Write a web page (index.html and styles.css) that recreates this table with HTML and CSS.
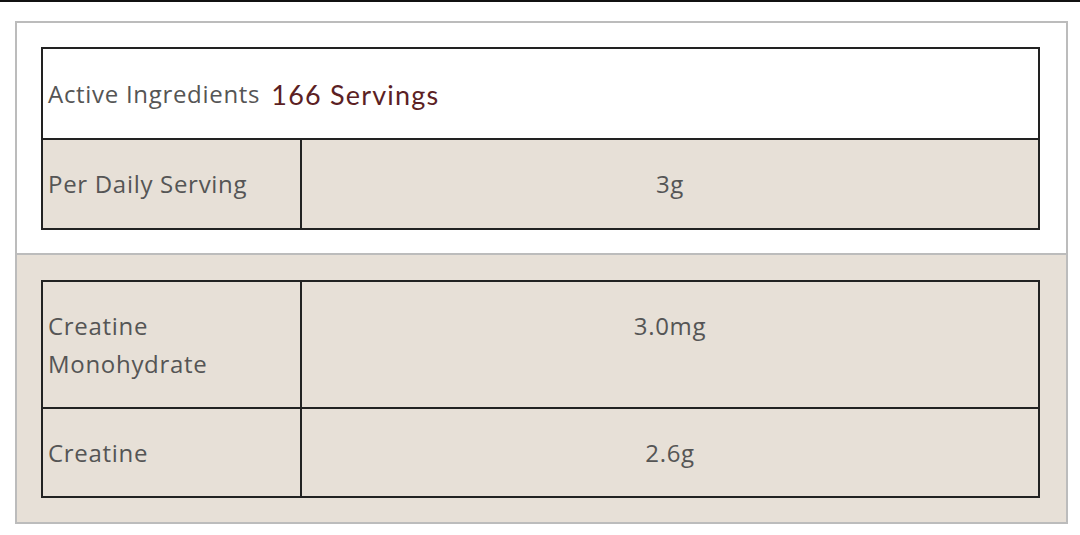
FILE: index.html
```
<!DOCTYPE html>
<html>
<head>
<meta charset="utf-8">
<link rel="stylesheet" href="styles.css">
</head>
<body>
<div class="topbar"></div>
<div class="panel">
  <div class="sec sec-top">
    <table class="tbl">
      <tr class="head"><td colspan="2"><div class="headline"><span class="lbl">Active Ingredients</span><span class="servings">166 Servings</span></div></td></tr>
      <tr><td class="c1">Per Daily Serving</td><td class="c2">3g</td></tr>
    </table>
  </div>
  <div class="sec sec-bottom">
    <table class="tbl">
      <tr><td class="c1">Creatine<br>Monohydrate</td><td class="c2">3.0mg</td></tr>
      <tr><td class="c1">Creatine</td><td class="c2">2.6g</td></tr>
    </table>
  </div>
</div>
</body>
</html>
```
FILE: styles.css
```
html, body { margin: 0; padding: 0; background: #fff; }
body { font-family: "Open Sans", "Liberation Sans", sans-serif; color: #555; }
.topbar { height: 2px; background: #111; }
.panel {
  margin: 19px 12px 0 15px;
  border: 2px solid #bcbcbc;
  width: 1049px;
}
.sec-top { background: #fff; padding: 24px 26px 23px 24px; border-bottom: 2px solid #bcbcbc; }
.sec-bottom { background: #e7e0d7; padding: 25px 26px 24px 24px; }
.tbl { width: 999px; border-collapse: collapse; }
.tbl td {
  border: 2px solid #222;
  font-size: 24px;
  letter-spacing: 0.7px;
  line-height: 38px;
  padding: 25px 5px 25px 5px;
  vertical-align: top;
}
.sec-bottom .tbl td { padding: 25px 5px 24px 5px; }
.tbl .head td { background: #fff; padding: 26px 5px 25px 5px; }
.sec-top .tbl tr:not(.head) td { background: #e7e0d7; }
.headline { display: flex; align-items: center; height: 38px; gap: 11px; }
.c1 { width: 247px; }
.c2 { text-align: center; }
.lbl { line-height: 38px; }
.servings {
  font-family: "Lato", "Noto Sans", sans-serif;
  font-size: 27px;
  letter-spacing: 1.2px;
  line-height: 38px;
  color: #5c1f24;
  position: relative;
  top: 1px;
}
```
